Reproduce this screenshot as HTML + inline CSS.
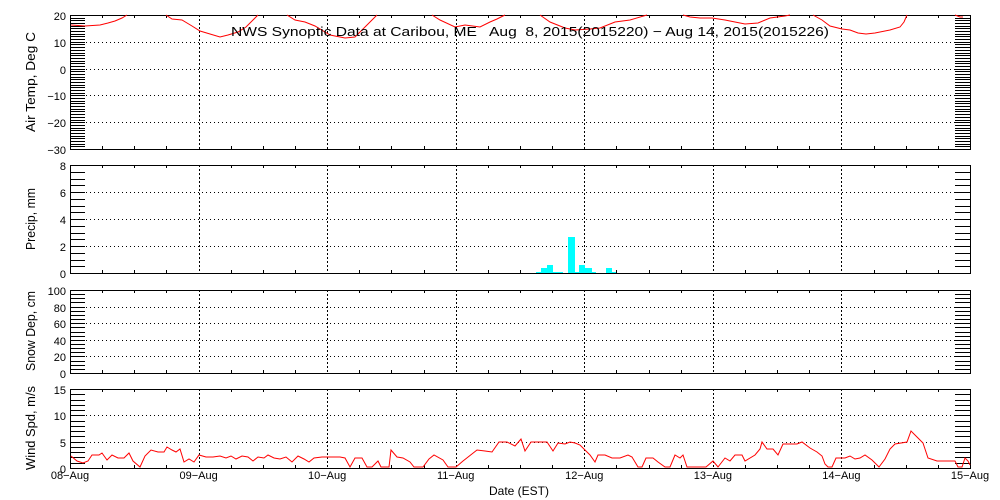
<!DOCTYPE html>
<html><head><meta charset="utf-8"><style>
html,body{margin:0;padding:0;background:#fff;width:1000px;height:500px;overflow:hidden}
svg{display:block}
text{font-family:"Liberation Sans",sans-serif;font-size:11px;fill:#000}
</style></head><body>
<svg id="s" width="1000" height="500" xmlns="http://www.w3.org/2000/svg"></svg>
<script>
var s=document.getElementById('s'),h='';
var L=70,R=970;
function line(x1,y1,x2,y2,extra){h+='<line x1="'+x1+'" y1="'+y1+'" x2="'+x2+'" y2="'+y2+'" stroke="#000" stroke-width="1" '+(extra||'')+'/>';}
function txt(x,y,t,anch,extra){h+='<text x="'+x+'" y="'+y+'" text-anchor="'+(anch||'start')+'" '+(extra||'')+'>'+t+'</text>';}
var days=[];for(var i=0;i<8;i++)days.push(L+i*(R-L)/7);
function panel(top,bot,vmin,vmax,minor,major,title,tcy,tl){
  h+='<rect x="'+L+'.5" y="'+top+'.5" width="'+(R-L)+'" height="'+(bot-top)+'" fill="none" stroke="#000"/>';
  function Y(v){return bot-(v-vmin)/(vmax-vmin)*(bot-top);}
  for(var v=vmin;v<=vmax+1e-6;v+=minor){
    var y=Math.round(Y(v))+0.5;
    var isMaj=Math.abs((v-vmin)/major-Math.round((v-vmin)/major))<1e-6;
    line(L,y,L+15,y);line(R-15,y,R,y);
    if(isMaj){
      if(v>vmin&&v<vmax)line(L,y,R,y,'stroke-dasharray="1,3"');
      txt(L-4,Math.round(Y(v))+5,(v<0?'\u2212'+(-v):v),'end');
    }
  }
  for(var i=1;i<7;i++)line(Math.round(days[i])+0.5,top,Math.round(days[i])+0.5,bot,'stroke-dasharray="2,2"');
  for(var k=1;k<28;k++){if(k%4==0)continue;var x=Math.round(L+k*(R-L)/28)+0.5;line(x,top,x,top+3);line(x,bot,x,bot-3);}
  h+='<text x="0" y="0" text-anchor="middle" textLength="'+tl+'" lengthAdjust="spacingAndGlyphs" transform="translate(35,'+tcy+') rotate(-90)" style="font-size:13px">'+title+'</text>';
}
panel(15,149,-30,20,1,10,'Air Temp, Deg C',82,100);
panel(165,273,0,8,0.5,2,'Precip, mm',219,62);
panel(290,373,0,100,5,20,'Snow Dep, cm',331,80);
panel(389,468,0,15,1,5,'Wind Spd, m/s',428,84);
var bars=[[536,541,272],[541,547,268],[547,553,265],[553,563,272],[568,575,237],[575,579,272],[579,585,265],[585,592,268],[592,596,272],[606,612,268],[612,616,272]];
bars.forEach(function(b){h+='<rect x="'+b[0]+'" y="'+b[2]+'" width="'+(b[1]-b[0])+'" height="'+(273-b[2])+'" fill="#00ffff"/>';});
function pl(pts){h+='<polyline fill="none" stroke="#f00" stroke-width="1" points="'+pts+'"/>';}
pl('71,25 85,26 100,25 108,23 115,21 122,18 127,15');
pl('166,15 172,19 182,20 192,26 200,31 210,34 220,37 228,35 238,32 246,27 252,21 258,15');
pl('287,15 295,20 305,22 315,26 330,35 345,38 355,37 362,30 370,22 377,15');
pl('432,15 440,20 455,27 465,25 480,27 490,22 497,19 505,15');
pl('540,15 550,22 565,28 575,30 590,29 600,28 615,22 630,20 647,15');
pl('683,15 690,17 700,18 712,18 725,20 735,22 745,24 758,23 770,18 785,16 790,15');
pl('813,15 822,20 830,26 842,29 850,30 858,33 866,34 875,33 890,30 900,27 904,22 907,15');
pl('955,15 960,17 963,17');
pl('71,456 77,461 83,463 88,461 92,455 99,455 102,453 107,460 112,455 118,458 124,458 129,453 133,461 140,467 145,456 151,450 158,452 164,452 167,447 172,450 176,452 180,449 184,462 189,459 194,462 199,455 206,457 213,457 220,456 226,458 231,456 236,459 242,456 248,457 253,461 258,457 264,458 268,455 274,458 280,459 286,457 292,462 298,456 304,459 309,462 314,458 322,457 330,457 340,457 345,458 350,467 355,458 362,458 367,467 372,467 378,461 381,467 389,467 391,450 397,457 403,458 410,462 414,467 423,467 429,459 434,455 443,460 448,467 456,467 463,461 477,450 485,451 492,452 499,442 507,442 515,446 521,439 525,451 531,442 540,442 547,442 553,451 558,443 565,444 570,442 575,443 580,445 590,455 595,462 598,455 605,455 612,458 620,458 628,455 632,457 638,467 642,467 646,458 653,458 658,462 665,467 670,467 675,455 680,458 683,455 687,467 706,467 713,461 718,467 725,458 730,461 735,455 742,455 745,461 755,455 760,449 762,442 767,449 773,449 778,455 783,444 797,444 802,442 810,448 817,452 822,456 825,464 828,467 832,467 836,458 845,458 850,456 855,459 860,458 865,455 872,460 879,467 885,459 890,449 895,444 907,442 911,431 918,438 923,443 928,458 937,461 955,461 958,467 962,467 965,458 968,461 970,465');
var lab=['08-Aug','09-Aug','10-Aug','11-Aug','12-Aug','13-Aug','14-Aug','15-Aug'];
for(var i=0;i<8;i++)txt(days[i],479,lab[i].replace('-','\u2212'),'middle');
txt(519,495,'Date (EST)','middle','style="font-size:12px"');
h+='<text x="231" y="36" textLength="598" lengthAdjust="spacingAndGlyphs" style="font-size:13px;white-space:pre" xml:space="preserve">NWS Synoptic Data at Caribou, ME   Aug  8, 2015(2015220) \u2212 Aug 14, 2015(2015226)</text>';
s.innerHTML=h;
</script>
</body></html>
